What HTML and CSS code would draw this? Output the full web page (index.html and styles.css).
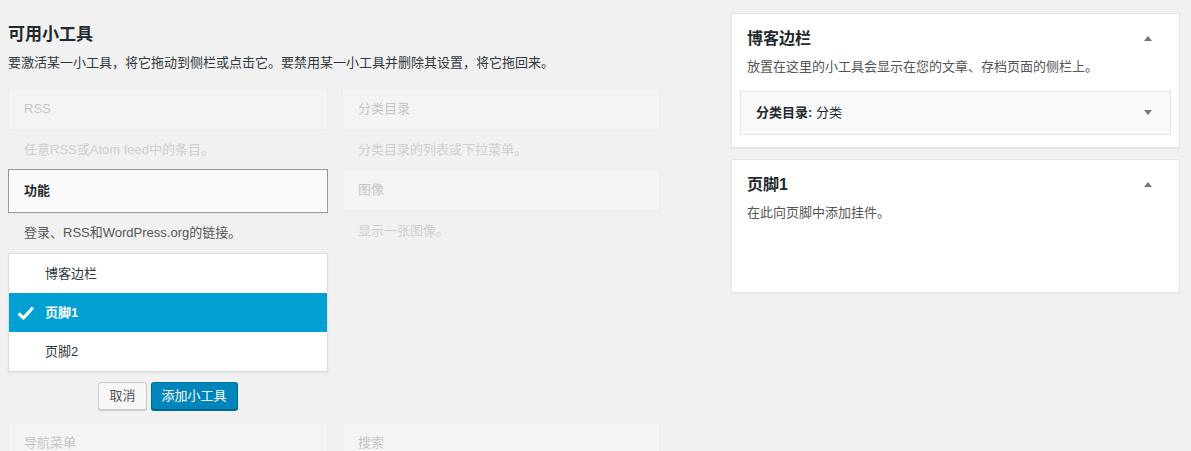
FILE: index.html
```html
<!DOCTYPE html>
<html lang="zh-CN">
<head>
  <meta charset="UTF-8" />
  <title>小工具</title>
  <link rel="stylesheet" href="styles.css">
</head>
<body>

  <div class="wrap">
    <div class="available">
      <h2 class="page-title">可用小工具</h2>
      <p class="page-desc">要激活某一小工具，将它拖动到侧栏或点击它。要禁用某一小工具并删除其设置，将它拖回来。</p>

      <div class="widget-grid">
        <div class="widget faded">
          <div class="widget-top"><h3>RSS</h3></div>
          <div class="widget-desc">任意RSS或Atom feed中的条目。</div>
        </div>
        <div class="widget faded">
          <div class="widget-top"><h3>分类目录</h3></div>
          <div class="widget-desc">分类目录的列表或下拉菜单。</div>
        </div>

        <div class="widget in-question">
          <div class="widget-top"><h3>功能</h3></div>
          <div class="widget-desc">登录、RSS和WordPress.org的链接。</div>
          <div class="chooser">
            <ul class="chooser-list">
              <li>博客边栏</li>
              <li class="selected">
                <svg class="check" width="20" height="16" viewBox="0 0 20 16">
                  <path d="M2.5 8.5 L7.5 13 L17 2.5" fill="none" stroke="#fff" stroke-width="3.2" stroke-linejoin="round" />
                </svg>
                页脚1
              </li>
              <li>页脚2</li>
            </ul>
            <div class="chooser-actions">
              <button class="btn">取消</button>
              <button class="btn btn-primary">添加小工具</button>
            </div>
          </div>
        </div>
        <div class="widget faded">
          <div class="widget-top"><h3>图像</h3></div>
          <div class="widget-desc">显示一张图像。</div>
        </div>

        <div class="widget faded">
          <div class="widget-top"><h3>导航菜单</h3></div>
          <div class="widget-desc">添加导航菜单到侧栏。</div>
        </div>
        <div class="widget faded">
          <div class="widget-top"><h3>搜索</h3></div>
          <div class="widget-desc">一个用于您站点的搜索框。</div>
        </div>
      </div>
    </div>

    <div class="sidebars">
      <div class="sidebar">
        <div class="sidebar-head">
          <h2>博客边栏</h2>
          <svg class="arrow" width="8" height="5" viewBox="0 0 8 5"><polygon points="0,5 4,0 8,5" /></svg>
        </div>
        <p class="sidebar-desc">放置在这里的小工具会显示在您的文章、存档页面的侧栏上。</p>
        <div class="sidebar-widgets">
          <div class="sidebar-widget">
            <h3>分类目录: <span>分类</span></h3>
            <svg class="arrow" width="8" height="5" viewBox="0 0 8 5"><polygon points="0,0 8,0 4,5" /></svg>
          </div>
        </div>
      </div>

      <div class="sidebar">
        <div class="sidebar-head">
          <h2>页脚1</h2>
          <svg class="arrow" width="8" height="5" viewBox="0 0 8 5"><polygon points="0,5 4,0 8,5" /></svg>
        </div>
        <p class="sidebar-desc">在此向页脚中添加挂件。</p>
        <div class="sidebar-widgets empty"></div>
      </div>
    </div>
  </div>

</body>
</html>
```

FILE: styles.css
```css
body {
  font-family: 'Liberation Sans', 'Noto Sans CJK SC', sans-serif;
  font-size: 13px;
  line-height: 1.5;
  color: #32373c;
  background-color: #f1f1f1;
  margin: 0;
  padding: 0;
}

.wrap {
  display: flex;
  justify-content: space-between;
  padding: 0 11px 0 8px;
}

.available {
  width: 652px;
}

.page-title {
  font-size: 17px;
  font-weight: 600;
  line-height: 22px;
  color: #23282d;
  margin: 24px 0 7px;
}

.page-desc {
  margin: 0 0 15px;
  color: #32373c;
}

.widget-grid {
  display: grid;
  grid-template-columns: 320px 318px;
  column-gap: 14px;
  align-items: start;
}

.widget-top {
  height: 40px;
  background: #fff;
  border: 1px solid #e5e5e5;
  box-shadow: 0 1px 1px rgba(0, 0, 0, 0.04);
  display: flex;
  align-items: center;
  padding: 0 15px;
}

.widget-top h3 {
  margin: 0;
  font-size: 13px;
  font-weight: 600;
  color: #23282d;
}

.widget-desc {
  padding: 10px 15px 10px 16px;
  line-height: 19.5px;
  color: #555;
}

.widget.faded {
  opacity: 0.22;
}

.widget.faded h3 {
  font-weight: 400;
}

.in-question .widget-top {
  height: 42px;
  background: #fafafa;
  border-color: #999;
}

.chooser-list {
  list-style: none;
  margin: 0;
  padding: 0;
  background: #fff;
  border: 1px solid #ddd;
  box-shadow: 0 1px 2px rgba(0, 0, 0, 0.07);
}

.chooser-list li {
  position: relative;
  padding: 10px 0 10px 36px;
  line-height: 19px;
  color: #32373c;
}

.chooser-list li.selected {
  background: #00a0d2;
  color: #fff;
  font-weight: 600;
}

.check {
  position: absolute;
  left: 7px;
  top: 12px;
}

.chooser-actions {
  display: flex;
  justify-content: center;
  gap: 4px;
  margin: 10px 0 12px;
}

.btn {
  font-family: inherit;
  font-size: 13px;
  height: 28px;
  line-height: 26px;
  padding: 0 10px;
  border: 1px solid #ccc;
  border-radius: 3px;
  background: #f7f7f7;
  color: #555;
  box-shadow: 0 1px 0 #ccc;
  cursor: pointer;
}

.btn-primary {
  background: #0085ba;
  border-color: #0073aa #006799 #006799;
  color: #fff;
  box-shadow: 0 1px 0 #006799;
}

.sidebars {
  width: 449px;
  padding-top: 13px;
}

.sidebar {
  background: #fff;
  border: 1px solid #e5e5e5;
  box-shadow: 0 1px 1px rgba(0, 0, 0, 0.04);
  padding: 14px 8px 12px;
  margin-bottom: 11px;
}

.sidebar-head {
  display: flex;
  justify-content: space-between;
  align-items: center;
  padding: 0 19px 0 7px;
}

.sidebar-head h2 {
  margin: 0;
  font-size: 16px;
  font-weight: 600;
  line-height: 21px;
  color: #23282d;
}

.arrow {
  fill: #72777c;
}

.sidebar-desc {
  margin: 8px 0 0;
  padding: 0 7px;
  color: #555;
}

.sidebar-widgets {
  margin-top: 14px;
}

.sidebar-widgets.empty {
  min-height: 44px;
}

.sidebar-widget {
  height: 42px;
  background: #fafafa;
  border: 1px solid #e5e5e5;
  display: flex;
  justify-content: space-between;
  align-items: center;
  padding: 0 18px 0 15px;
}

.sidebar-widget h3 {
  margin: 0;
  font-size: 13px;
  font-weight: 600;
  color: #23282d;
}

.sidebar-widget h3 span {
  font-weight: 400;
}
```
